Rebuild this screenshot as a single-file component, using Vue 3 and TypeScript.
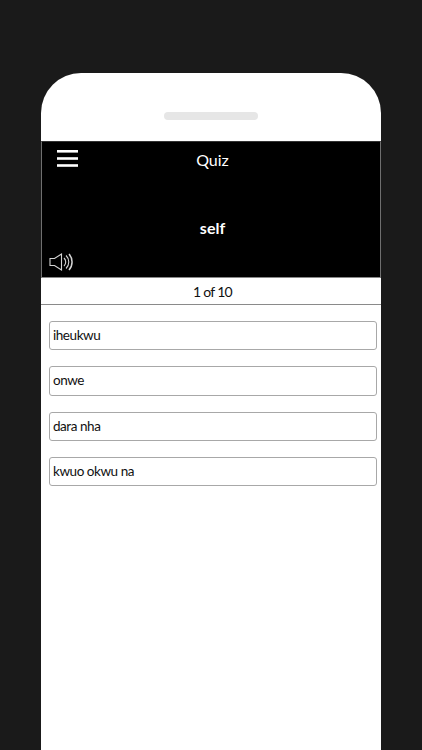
<script setup lang="ts">
const options: string[] = ['iheukwu', 'onwe', 'dara nha', 'kwuo okwu na']
</script>

<template>
  <div class="page">
    <div class="phone">
      <div class="top">
        <div class="pill"></div>
      </div>
      <div class="hero">
        <div class="bar">
          <svg class="menu" width="22" height="18" viewBox="0 0 22 18">
            <rect x="0" y="0" width="21" height="2.6" fill="#fff" />
            <rect x="0" y="7.2" width="21" height="2.6" fill="#fff" />
            <rect x="0" y="14.2" width="21" height="2.6" fill="#fff" />
          </svg>
          <span class="title">Quiz</span>
        </div>
        <div class="word">self</div>
        <svg class="speaker" width="26" height="18" viewBox="0 0 26 18" fill="none" stroke="#d4d4d4" stroke-width="1.1">
          <path d="M1 5.5h4.5L12.5 1v16l-7-4.5H1z" />
          <path d="M15 5a5.5 5.5 0 0 1 0 8" />
          <path d="M17 2.5a9 9 0 0 1 0 13" />
          <path d="M20 1a12 12 0 0 1 0 16" stroke-width="1.5" />
        </svg>
      </div>
      <div class="counter">1 of 10</div>
      <div class="options">
        <div v-for="option in options" :key="option" class="option">{{ option }}</div>
      </div>
    </div>
  </div>
</template>

<style>
html, body { margin: 0; background: #1a1a1a; }
</style>

<style scoped>
.page {
  width: 422px;
  height: 750px;
  overflow: hidden;
  background: #1a1a1a;
  padding: 73px 41px 0;
  box-sizing: border-box;
  font-family: Lato, "Open Sans", sans-serif;
}
.phone {
  width: 340px;
  height: 677px;
  background: #fff;
  border-radius: 40px 40px 0 0;
  overflow: hidden;
}
.top {
  height: 68px;
  box-sizing: border-box;
  padding-top: 39px;
  display: flex;
  justify-content: center;
}
.pill {
  width: 94px;
  height: 8px;
  border-radius: 4px;
  background: #e6e6e6;
}
.hero {
  position: relative;
  height: 137px;
  box-sizing: border-box;
  background: #000;
  border: 1px solid #6f6f6f;
  border-top-color: #333;
  border-bottom-color: #888;
  color: #fff;
  display: flex;
  flex-direction: column;
  align-items: center;
}
.bar {
  align-self: stretch;
  display: flex;
  justify-content: center;
  padding-top: 7px;
}
.menu {
  position: absolute;
  left: 15px;
  top: 8px;
}
.title {
  font-size: 16px;
  line-height: 22px;
  margin-left: 3px;
}
.word {
  margin-top: 46px;
  font-size: 16px;
  font-weight: 700;
  line-height: 22px;
  margin-left: 3px;
}
.speaker {
  position: absolute;
  left: 6.5px;
  bottom: 6px;
}
.counter {
  height: 27px;
  box-sizing: border-box;
  border-bottom: 1px solid #8a8a8a;
  text-align: center;
  font-size: 14px;
  letter-spacing: -0.7px;
  line-height: 27px;
  color: #111;
  padding-left: 3px;
}
.options {
  display: flex;
  flex-direction: column;
  gap: 16px;
  padding: 16px 4px 0 8px;
}
.option {
  height: 29.3px;
  box-sizing: border-box;
  border: 1px solid #a8a8a8;
  border-radius: 3px;
  padding-left: 3px;
  font-size: 13.5px;
  letter-spacing: -0.45px;
  line-height: 27px;
  color: #111;
}
</style>
